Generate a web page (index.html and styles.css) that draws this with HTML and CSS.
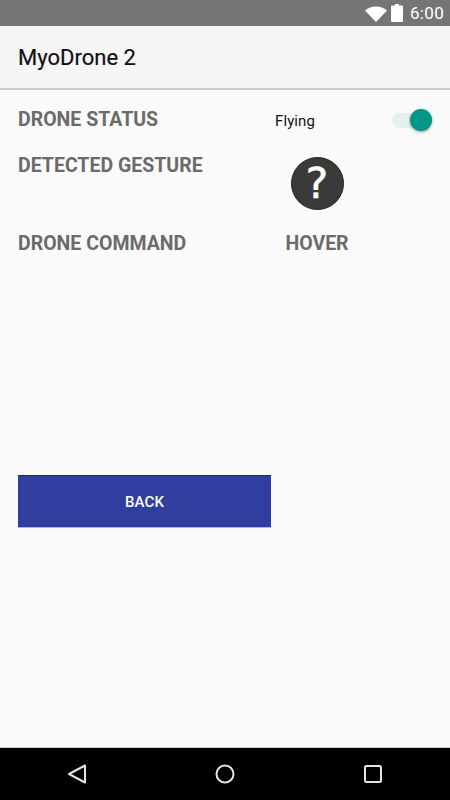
FILE: index.html
```html
<!DOCTYPE html>
<html lang="en">
<head>
  <meta charset="UTF-8" />
  <title>MyoDrone 2</title>
  <link rel="stylesheet" href="styles.css">
</head>
<body>
  <div class="screen">
    <div class="statusbar">
      <svg class="wifi" width="22" height="16" viewBox="0 0 22 16"><path d="M0 4.500C3 2 6.800.5 11 .5s8 1.500 11 4L11 16z" fill="#fff"/></svg>
      <svg class="battery" width="12" height="18" viewBox="0 0 12 18"><path d="M4 0h4v1.500h3a1 1 0 0 1 1 1V17a1 1 0 0 1-1 1H1a1 1 0 0 1-1-1V2.500a1 1 0 0 1 1-1h3z" fill="#fff"/></svg>
      <span class="clock">6:00</span>
    </div>

    <div class="appbar">MyoDrone 2</div>

    <div class="content">
      <div class="row row-status">
        <div class="label">DRONE STATUS</div>
        <div class="status-value">
          <span class="flying">Flying</span>
          <div class="switch"><div class="track"></div><div class="thumb"></div></div>
        </div>
      </div>

      <div class="row row-gesture">
        <div class="label">DETECTED GESTURE</div>
        <div class="value">
          <div class="gesture-icon">?</div>
        </div>
      </div>

      <div class="row row-command">
        <div class="label">DRONE COMMAND</div>
        <div class="value label">HOVER</div>
      </div>

      <button class="back">BACK</button>
    </div>

    <div class="navbar">
      <svg width="20" height="20" viewBox="0 0 20 20"><path d="M18 1.500V18.500L2 10z" fill="none" stroke="#e4e4e4" stroke-width="2" stroke-linejoin="round"/></svg>
      <svg width="20" height="20" viewBox="0 0 20 20"><circle cx="10" cy="10" r="8.500" fill="none" stroke="#e4e4e4" stroke-width="2"/></svg>
      <svg width="20" height="20" viewBox="0 0 20 20"><rect x="2" y="2" width="16" height="16" rx="1.500" fill="none" stroke="#e4e4e4" stroke-width="2"/></svg>
    </div>
  </div>
</body>
</html>
```

FILE: styles.css
```css
body {
  margin: 0;
  font-family: 'Roboto', sans-serif;
  background: #fafafa;
}
.screen {
  width: 450px;
  height: 800px;
  display: flex;
  flex-direction: column;
  overflow: hidden;
}
.statusbar {
  height: 26px;
  background: #757575;
  display: flex;
  align-items: center;
  justify-content: flex-end;
  padding-right: 6px;
  box-sizing: border-box;
}
.wifi {
  margin-right: 4px;
  margin-top: 1px;
}
.battery {
  margin-right: 7px;
}
.clock {
  color: #fff;
  font-size: 17px;
  line-height: 26px;
  letter-spacing: 0.3px;
}
.appbar {
  height: 62px;
  background: #f5f5f5;
  border-bottom: 2px solid #ccc;
  padding-left: 18px;
  font-size: 22px;
  -webkit-text-stroke: 0.2px #111;
  line-height: 64px;
  color: #111;
}
.content {
  flex: 1;
  padding: 0 18px;
  background: #fafafa;
}
.row {
  display: flex;
}
.label {
  font-size: 19.500px;
  font-weight: 700;
  color: #6b6b6b;
  line-height: 22px;
}
.row > .label:first-child {
  width: 257px;
  flex: none;
}
.row-status {
  padding-top: 19px;
}
.status-value {
  flex: 1;
  height: 22px;
  display: flex;
  align-items: center;
  justify-content: space-between;
}
.flying {
  font-size: 15px;
  letter-spacing: 0.1px;
  color: #111;
  margin-top: 2px;
}
.switch {
  position: relative;
  width: 40px;
  height: 24px;
  margin-right: -1px;
}
.track {
  position: absolute;
  left: -1px;
  top: 5px;
  width: 38px;
  height: 15px;
  border-radius: 8px;
  background: #e6f1ef;
}
.thumb {
  position: absolute;
  left: 17px;
  top: 1px;
  width: 22px;
  height: 22px;
  border-radius: 50%;
  background: #009688;
  box-shadow: 0 1px 3px rgba(0, 0, 0, 0.4);
}
.row-gesture {
  padding-top: 24px;
  height: 76px;
}
.value {
  width: 84px;
  display: flex;
  justify-content: center;
}
.gesture-icon {
  width: 53px;
  height: 53px;
  margin-top: 2px;
  border-radius: 50%;
  background: #3a3a3a;
  border: 1px solid #222;
  box-sizing: border-box;
  color: #fff;
  -webkit-text-stroke: 0.5px #fff;
  font-family: 'DejaVu Sans', sans-serif;
  font-size: 43px;
  line-height: 50px;
  text-align: center;
}
.row-command {
  padding-top: 2px;
}
.value.label {
  display: block;
  text-align: center;
}
.back {
  display: block;
  width: 253px;
  height: 53px;
  margin-top: 220px;
  padding: 0;
  background: #303f9f;
  border: none;
  border-top: 1px solid #1a237e;
  border-bottom: 1px solid #b4b8d6;
  color: #fff;
  font-family: 'Roboto', sans-serif;
  font-size: 15px;
  font-weight: 500;
  letter-spacing: 0.1px;
}
.navbar {
  height: 53px;
  box-sizing: border-box;
  background: #000;
  border-top: 1px solid #ccc;
  display: flex;
  align-items: center;
  justify-content: space-between;
  padding: 0 67px;
}
```
